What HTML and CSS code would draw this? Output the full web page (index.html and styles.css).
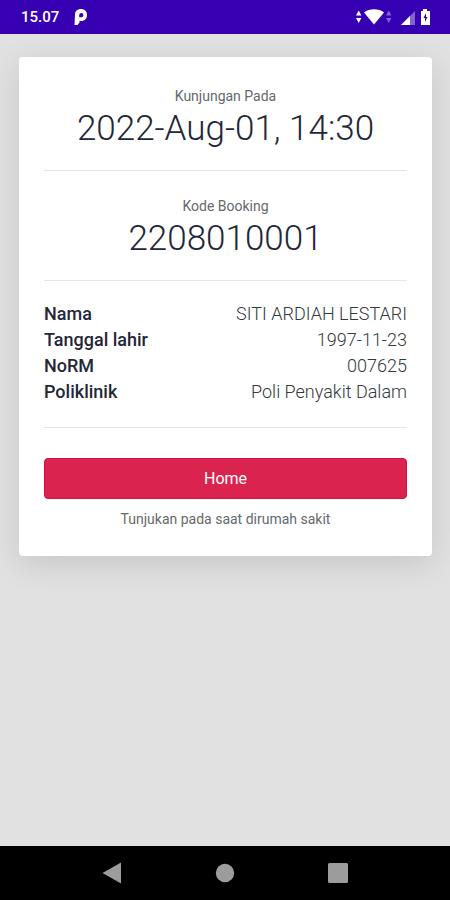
FILE: index.html
```html
<!DOCTYPE html>
<html lang="id">
<head>
<meta charset="utf-8">
<meta name="viewport" content="width=device-width, initial-scale=1">
<title>Kode Booking</title>
<link rel="stylesheet" href="styles.css">
</head>
<body>
<header class="status">
  <div class="status-group">
    <span class="clock">15.07</span>
    <svg class="app-icon" width="14" height="16" viewBox="0 0 14 16" aria-hidden="true">
      <path fill="#fff" fill-rule="evenodd" d="M1 5.500C1 2.200 3.600 0 7 0c3.800 0 6 2.500 6 6 0 3.500-2.200 6-5.700 6H5.500v1.600L3.500 16H.5zM5.200 8.300h1.900a2.100 2.100 0 1 0-1.900-2.100z"/>
    </svg>
  </div>
  <svg class="signals" width="76" height="18" viewBox="0 0 76 18" aria-hidden="true">
    <path fill="#fff" d="M1 7.500L3.700 2.500l2.700 5zM1 10h5.400l-2.700 5z"/>
    <path fill="#fff" d="M9 4.500C14.500.2 23.500.2 29 4.500L19 16.500z"/>
    <path fill="#8064d3" d="M31 7.500L33.700 2.500l2.700 5zM31 10h5.400l-2.700 5z"/>
    <path fill="#8064d3" d="M46 17L60 3v14z"/>
    <path fill="#fff" d="M46 17L55 8v9z"/>
    <path fill="#fff" d="M68 1h4v2h3v14H66V3h2z"/>
    <path fill="#3700b3" d="M71 5v4h1.500L70 14v-4h-1.500z"/>
  </svg>
</header>
<main class="page">
  <article class="card">
    <section class="block">
      <p class="label">Kunjungan Pada</p>
      <h1 class="value">2022-Aug-01, 14:30</h1>
    </section>
    <section class="block">
      <p class="label">Kode Booking</p>
      <h2 class="value">2208010001</h2>
    </section>
    <dl class="details">
      <div class="row"><dt>Nama</dt><dd>SITI ARDIAH LESTARI</dd></div>
      <div class="row"><dt>Tanggal lahir</dt><dd>1997-11-23</dd></div>
      <div class="row"><dt>NoRM</dt><dd>007625</dd></div>
      <div class="row"><dt>Poliklinik</dt><dd>Poli Penyakit Dalam</dd></div>
    </dl>
    <button class="home" type="button">Home</button>
    <p class="label">Tunjukan pada saat dirumah sakit</p>
  </article>
</main>
<nav class="navbar" aria-label="Sistem">
  <button class="nav-button" type="button" aria-label="Kembali">
    <svg width="22" height="22" viewBox="0 0 22 22"><path fill="#9c9c9c" d="M1.500 11L20 .5v21z"/></svg>
  </button>
  <button class="nav-button" type="button" aria-label="Beranda">
    <svg width="22" height="22" viewBox="0 0 22 22"><circle cx="11" cy="11" r="9.200" fill="#9c9c9c"/></svg>
  </button>
  <button class="nav-button" type="button" aria-label="Terbaru">
    <svg width="22" height="22" viewBox="0 0 22 22"><rect x="1" y="1" width="20" height="20" rx="1.500" fill="#9c9c9c"/></svg>
  </button>
</nav>
</body>
</html>
```
FILE: styles.css
```css
* {
  box-sizing: border-box;
}

body {
  margin: 0;
  min-height: 100vh;
  display: flex;
  flex-direction: column;
  background: #e1e1e1;
  color: #1f2738;
  font-family: Roboto, "Liberation Sans", sans-serif;
  font-size: 18px;
}

p, h1, h2, dl, dd {
  margin: 0;
}

.status {
  height: 34px;
  padding: 0 19px 0 21px;
  display: flex;
  align-items: center;
  justify-content: space-between;
  background: #3700b3;
  color: #fff;
}

.status-group {
  display: flex;
  align-items: center;
  gap: 15px;
}

.clock {
  font-size: 15px;
  font-weight: 500;
  line-height: 34px;
}

.page {
  flex: 1;
  padding: 23px 18px 24px 19px;
}

.card {
  padding: 29px 25px 27px;
  background: #fff;
  border-radius: 4px;
  box-shadow: 0 8px 32px rgba(0, 0, 0, 0.12);
}

.block {
  padding-bottom: 18px;
  margin-bottom: 25px;
  border-bottom: 1px solid #e4e5e6;
  text-align: center;
}

.label {
  color: #64696c;
  font-size: 14px;
  font-weight: 400;
  line-height: 20px;
  text-align: center;
}

.value {
  font-size: 35px;
  font-weight: 350;
  line-height: 46px;
}

.details {
  margin-top: -5px;
  margin-bottom: 30px;
  padding-bottom: 22px;
  border-bottom: 1px solid #e4e5e6;
}

.row {
  display: flex;
  justify-content: space-between;
  line-height: 26px;
}

.row dt {
  font-weight: 500;
}

.row dd {
  color: #33393d;
  font-weight: 300;
}

.home {
  display: block;
  width: 100%;
  height: 41px;
  margin-bottom: 10px;
  padding: 0;
  border: 1px solid #d5103c;
  border-radius: 4px;
  background: #da234f;
  color: #fff;
  font: inherit;
  font-size: 16px;
}

.navbar {
  height: 54px;
  padding: 0 56px;
  display: grid;
  grid-template-columns: repeat(3, 1fr);
  background: #000;
}

.nav-button {
  display: flex;
  align-items: center;
  justify-content: center;
  padding: 0;
  border: 0;
  background: none;
}
```
